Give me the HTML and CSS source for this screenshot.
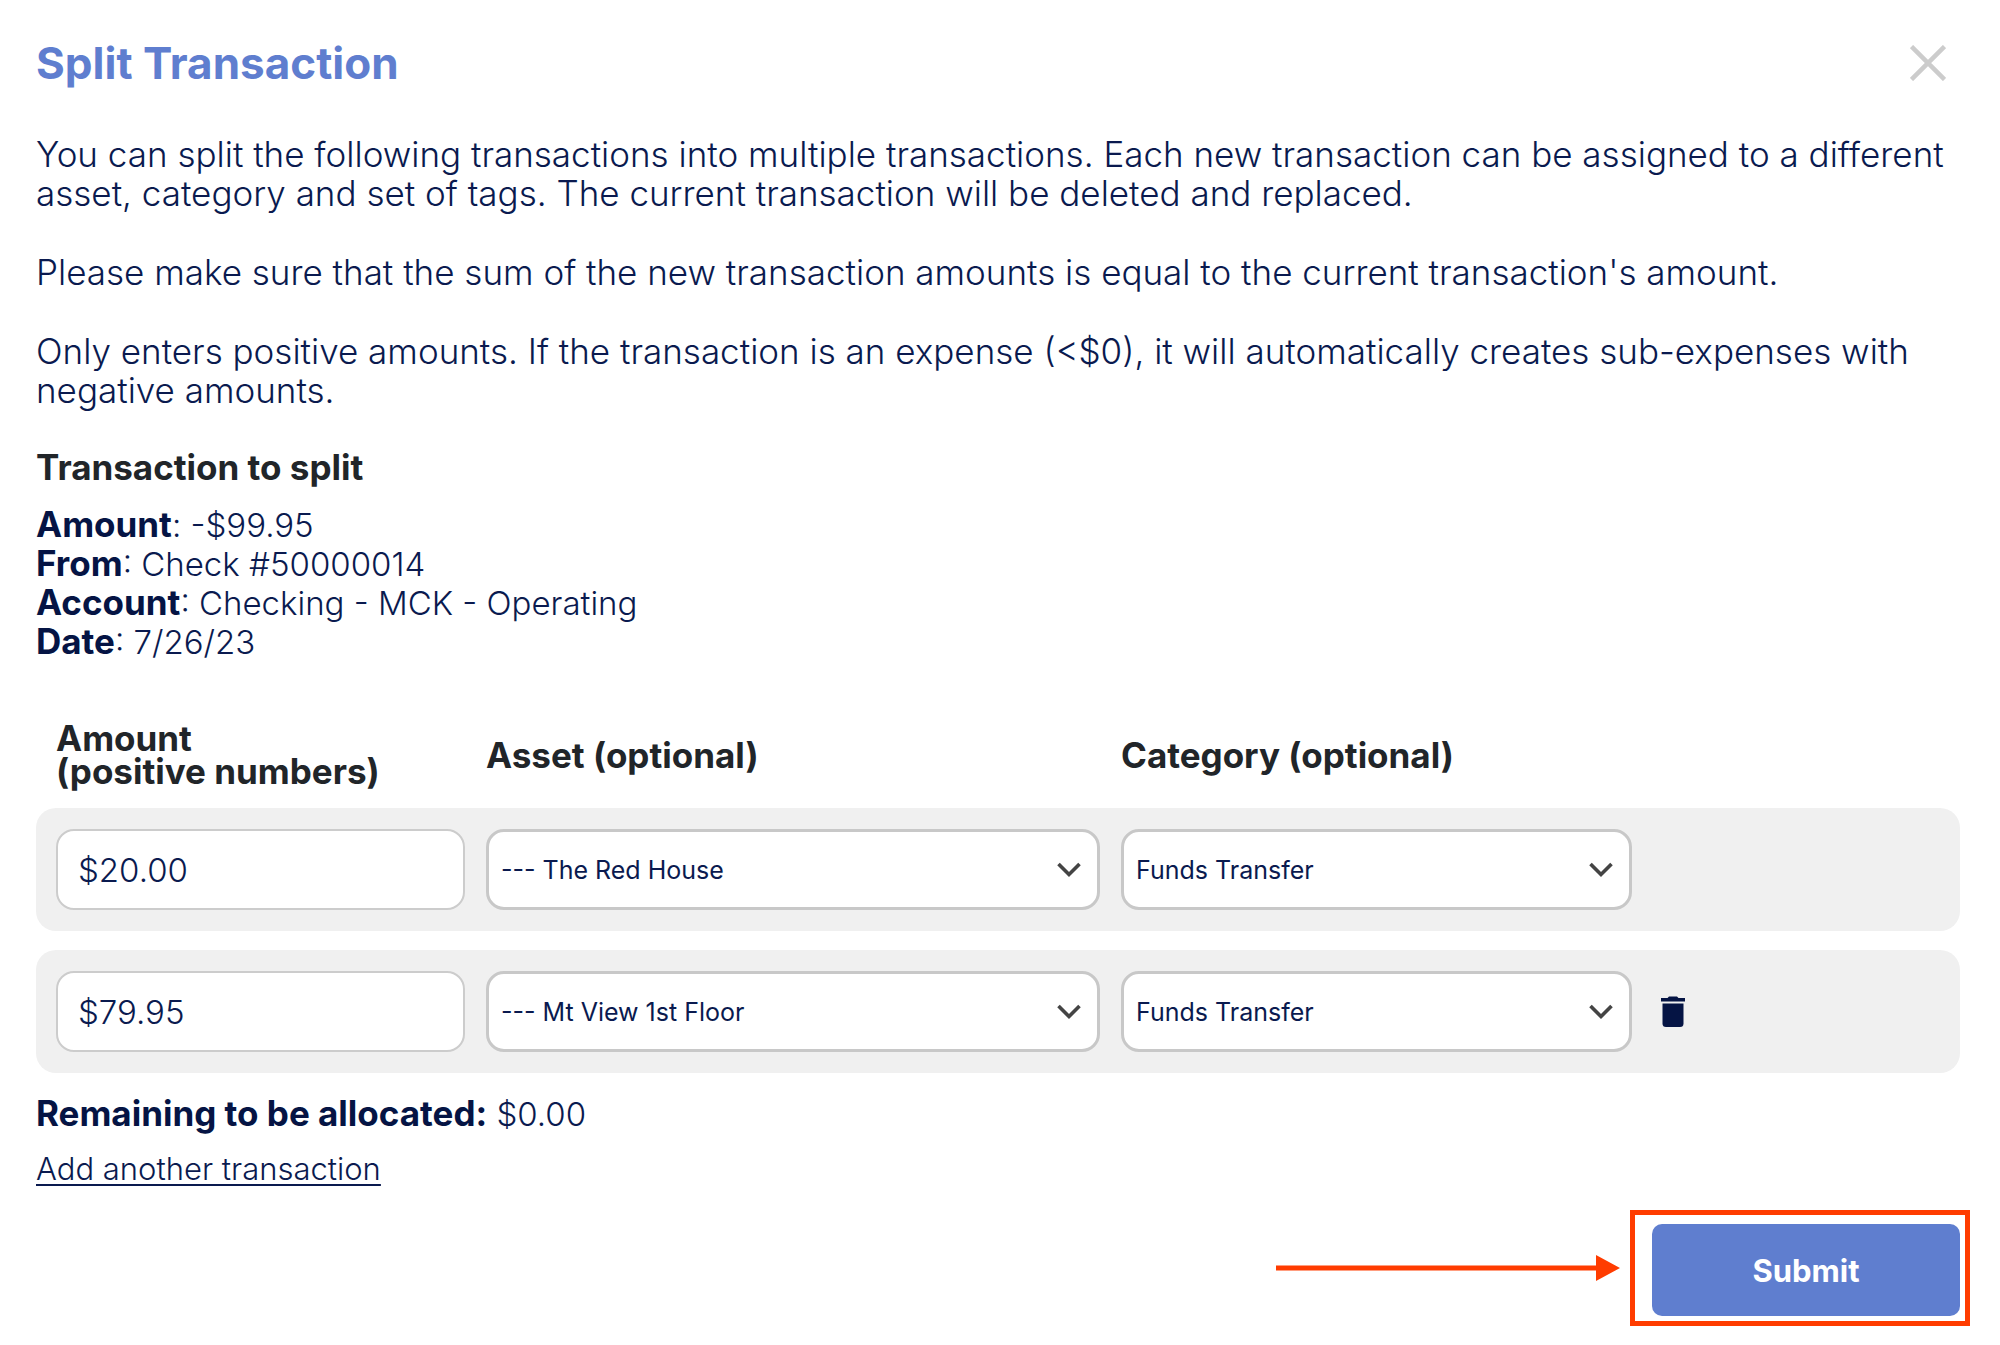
FILE: index.html
```html
<!DOCTYPE html>
<html lang="en">
<head>
<meta charset="utf-8">
<meta name="viewport" content="width=device-width, initial-scale=1">
<title>Split Transaction</title>
<link rel="stylesheet" href="styles.css">
</head>
<body>
<main class="dialog">
  <header class="dialog-header">
    <h1 class="dialog-title">Split Transaction</h1>
    <button class="icon-button close" type="button" aria-label="Close">
      <svg width="36" height="36" viewBox="0 0 36 36" fill="none" stroke="#cccccc" stroke-width="4.5"><path d="M1.5 1.5 34.5 34.5M34.5 1.5 1.5 34.5"/></svg>
    </button>
  </header>

  <section class="intro">
    <p>You can split the following transactions into multiple transactions. Each new transaction can be assigned to a different<br>asset, category and set of tags. The current transaction will be deleted and replaced.</p>
    <p>Please make sure that the sum of the new transaction amounts is equal to the current transaction's amount.</p>
    <p>Only enters positive amounts. If the transaction is an expense (&lt;$0), it will automatically creates sub-expenses with<br>negative amounts.</p>
  </section>

  <section class="summary">
    <h2 class="summary-title">Transaction to split</h2>
    <p><strong>Amount</strong>: -$99.95</p>
    <p><strong>From</strong>: Check #50000014</p>
    <p><strong>Account</strong>: Checking - MCK - Operating</p>
    <p><strong>Date</strong>: 7/26/23</p>
  </section>

  <form class="split-form">
    <div class="split-grid split-head">
      <label for="amount-1">Amount<br>(positive numbers)</label>
      <label for="asset-1">Asset (optional)</label>
      <label for="category-1">Category (optional)</label>
    </div>
    <div class="split-grid split-row">
      <input class="field amount" id="amount-1" type="text" value="$20.00">
      <div class="select-wrap">
        <select class="field select" id="asset-1"><option>--- The Red House</option></select>
        <svg class="chevron" width="24" height="16" viewBox="0 0 24 16" fill="none" stroke="#444444" stroke-width="3.6"><path d="M1.5 2 12 12.5 22.5 2"/></svg>
      </div>
      <div class="select-wrap">
        <select class="field select" id="category-1"><option>Funds Transfer</option></select>
        <svg class="chevron" width="24" height="16" viewBox="0 0 24 16" fill="none" stroke="#444444" stroke-width="3.6"><path d="M1.5 2 12 12.5 22.5 2"/></svg>
      </div>
    </div>
    <div class="split-grid split-row">
      <input class="field amount" type="text" value="$79.95" aria-label="Amount (positive numbers)">
      <div class="select-wrap">
        <select class="field select" aria-label="Asset (optional)"><option>--- Mt View 1st Floor</option></select>
        <svg class="chevron" width="24" height="16" viewBox="0 0 24 16" fill="none" stroke="#444444" stroke-width="3.6"><path d="M1.5 2 12 12.5 22.5 2"/></svg>
      </div>
      <div class="select-wrap">
        <select class="field select" aria-label="Category (optional)"><option>Funds Transfer</option></select>
        <svg class="chevron" width="24" height="16" viewBox="0 0 24 16" fill="none" stroke="#444444" stroke-width="3.6"><path d="M1.5 2 12 12.5 22.5 2"/></svg>
      </div>
      <button class="icon-button trash" type="button" aria-label="Delete row">
        <svg width="26" height="32" viewBox="0 0 26 32" fill="#051444"><path d="M1 2H7.500L9 0.500H17L18.500 2H25V5.500H1Z"/><path d="M2.500 7.500H23.500V27.500Q23.500 31 20 31H6Q2.500 31 2.500 27.500Z"/></svg>
      </button>
    </div>

    <p class="remaining"><strong>Remaining to be allocated:</strong> $0.00</p>
    <a class="add-link" href="#">Add another transaction</a>

    <footer class="actions">
      <svg class="arrow" width="344" height="26" viewBox="0 0 344 26" fill="#ff3c00" aria-hidden="true"><path d="M0 10.500H320V0L344 13 320 26V15.500H0Z"/></svg>
      <div class="callout">
        <button class="submit" type="submit">Submit</button>
      </div>
    </footer>
  </form>
</main>
</body>
</html>
```
FILE: styles.css
```css
* {
  box-sizing: border-box;
}

body {
  margin: 0;
  background: #ffffff;
  color: #0a1a4f;
  font-family: Inter, "Open Sans", sans-serif;
  font-size: 33px;
  font-weight: 300;
  line-height: 39px;
}

h1, h2, p {
  margin: 0;
}

strong {
  color: #051444;
  font-size: 35px;
  font-weight: 700;
  line-height: 1;
}

.dialog {
  padding: 38px 18px 18px 36px;
}

.dialog-header {
  display: flex;
  align-items: center;
  justify-content: space-between;
  padding-right: 36px;
}

.dialog-title {
  color: #5f7ecf;
  font-size: 44px;
  font-weight: 700;
  line-height: 50px;
}

.icon-button {
  display: flex;
  padding: 0;
  border: 0;
  background: none;
  cursor: pointer;
}

.intro {
  display: flex;
  flex-direction: column;
  gap: 40px;
  margin-top: 47px;
  font-size: 35px;
  font-weight: 350;
}

.summary {
  margin-top: 38px;
}

.summary-title {
  margin-bottom: 19px;
  color: #212529;
  font-size: 35px;
  font-weight: 700;
}

.split-form {
  margin: 60px 22px 0 0;
}

.split-grid {
  display: grid;
  grid-template-columns: 409fr 614fr 511fr 287fr;
  gap: 21px;
  align-items: center;
  padding: 21px 20px;
}

.split-head {
  padding-top: 0;
  padding-bottom: 20px;
  color: #212529;
  font-size: 35px;
  font-weight: 700;
  line-height: 33px;
}

.split-row {
  border-radius: 20px;
  background: #f0f0f0;
}

.split-row + .split-row {
  margin-top: 19px;
}

.field {
  width: 100%;
  height: 81px;
  border: 2px solid #cccccc;
  border-radius: 18px;
  background: #ffffff;
  color: #0a1a4f;
  font-family: inherit;
  font-weight: 400;
}

.amount {
  padding: 0 20px;
  font-size: 33px;
  font-weight: 350;
}

.select-wrap {
  display: grid;
  align-items: center;
}

.select-wrap > * {
  grid-area: 1 / 1;
}

.select {
  padding: 0 60px 0 12px;
  border-width: 3px;
  border-color: #c8c8c8;
  appearance: none;
  font-size: 25px;
}

.chevron {
  justify-self: end;
  margin-right: 19px;
  pointer-events: none;
}

.trash {
  justify-self: start;
  padding-left: 7px;
}

.remaining {
  margin-top: 22px;
}

.add-link {
  display: inline-block;
  margin-top: 15px;
  color: #0a1a4f;
  font-size: 31px;
  text-decoration-thickness: 2px;
  text-underline-offset: 4px;
}

.actions {
  display: flex;
  align-items: center;
  justify-content: flex-end;
  gap: 10px;
  margin: 22px -10px 0 0;
}

.callout {
  padding: 9px 5px 5px 17px;
  border: 5px solid #ff3c00;
}

.submit {
  width: 308px;
  height: 92px;
  border: 0;
  border-radius: 10px;
  background: #5f7ecf;
  color: #ffffff;
  font-family: inherit;
  font-size: 31px;
  font-weight: 700;
}
```
